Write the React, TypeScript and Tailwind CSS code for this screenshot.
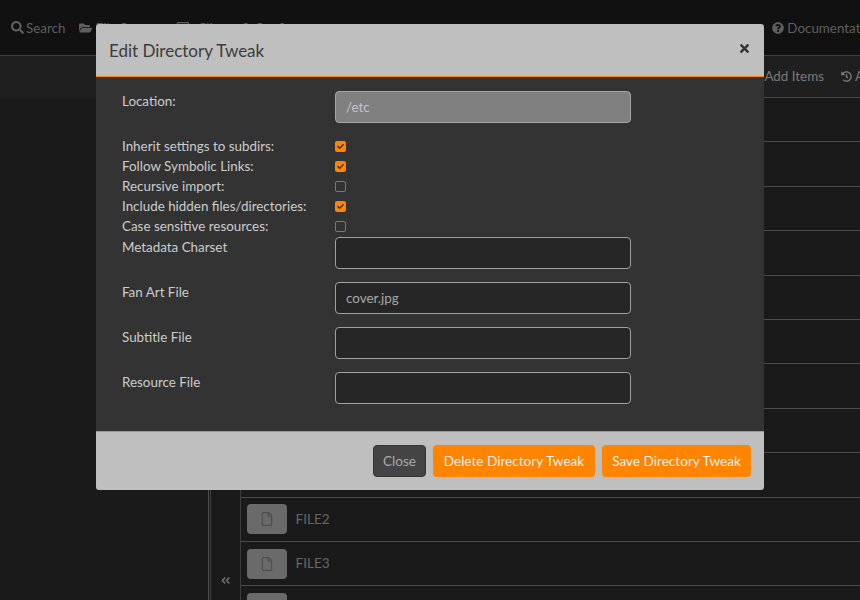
import { FaAngleDoubleLeft, FaCheck, FaFolderOpen, FaHistory, FaQuestionCircle, FaRegFile, FaRegSquare, FaSearch, FaTimes } from 'react-icons/fa'

const font = { fontFamily: 'Lato, sans-serif' }

function TweakInput({ value, disabled }: { value?: string; disabled?: boolean }) {
  return (
    <input
      readOnly
      value={value ?? ''}
      disabled={disabled}
      className={`h-[32px] w-[296px] rounded-[4px] border px-[10px] text-[13.4px] outline-none ${
        disabled ? 'border-[#a6a6a6] bg-[#808080] text-[#c4c4c4]' : 'border-[#a0a0a0] bg-[#262626] text-[#a8a8a8]'
      }`}
    />
  )
}

function CheckRow({ label, checked }: { label: string; checked?: boolean }) {
  return (
    <div className="flex h-[20px] items-center">
      <span className="w-[213px] text-[13.4px] leading-[20px] text-[#cccccc]">{label}</span>
      {checked ? (
        <span className="flex h-[11px] w-[11px] items-center justify-center rounded-[2px] bg-[#ff8400]">
          <FaCheck size={7} className="text-[#333333]" />
        </span>
      ) : (
        <span className="h-[11px] w-[11px] rounded-[2px] border border-[#7a7a7a] bg-[#333333]" />
      )}
    </div>
  )
}

function FieldRow({ label, value, disabled, className }: { label: string; value?: string; disabled?: boolean; className?: string }) {
  return (
    <div className={`flex items-start ${className ?? ''}`}>
      <span className="w-[213px] text-[13.4px] leading-[20px] text-[#cccccc]">{label}</span>
      <TweakInput value={value} disabled={disabled} />
    </div>
  )
}

function FileRow({ name }: { name: string }) {
  return (
    <div className="flex h-[44.4px] shrink-0 items-center gap-[8.5px] border-b border-[#4a4a4a] pl-[6px]">
      <span className="flex h-[30px] w-[40px] items-center justify-center rounded-[4px] bg-[#6a6a6a]">
        <FaRegFile size={14} className="text-[#505050]" />
      </span>
      <span className="text-[13.6px] text-[#666666]">{name}</span>
    </div>
  )
}

export default function App() {
  return (
    <div className="relative h-[600px] w-[860px] overflow-hidden bg-[#1a1a1a]" style={font}>
      {/* Page behind the dialog */}
      <div className="flex h-[56px] items-center justify-between overflow-hidden border-b border-[#5c3a14] bg-[#111111] pl-[11px] pt-[1px] text-[13.4px] text-[#5f5f5f]">
        <div className="flex items-center gap-[14px]">
          <span className="flex items-center gap-[2px]">
            <FaSearch size={13} />
            Search
          </span>
          <span className="flex w-[83px] items-center gap-[3px] whitespace-nowrap">
            <FaFolderOpen size={14} />
            File System
          </span>
          <span className="flex items-center gap-[7px] whitespace-nowrap">
            <FaRegSquare size={14} />
            Clients &amp; Config
          </span>
        </div>
        <span className="-mr-[19px] flex items-center gap-[3px] whitespace-nowrap">
          <FaQuestionCircle size={12} />
          Documentation
        </span>
      </div>
      <div className="flex h-[42px] bg-[#1f1f1f] text-[13.4px] text-[#7a7a7a]">
        <div className="w-[240px]" />
        <div className="flex flex-1 items-center justify-end gap-[17px] border-b border-[#4a4a4a]">
          <span>Add Items</span>
          <span className="flex w-[19px] items-center gap-[3px] overflow-hidden whitespace-nowrap">
            <FaHistory size={11} className="shrink-0" />
            Add
          </span>
        </div>
      </div>
      <div className="flex h-[502px]">
        <div className="w-[209px] border-r border-[#505050]" />
        <div className="relative ml-px w-[31px] border-x border-[#3c3c3c]">
          <FaAngleDoubleLeft size={11} className="absolute bottom-[14px] left-[9px] text-[#5f6b7a]" />
        </div>
        <div className="flex flex-1 flex-col overflow-hidden">
          {['', '', '', '', '', '', '', '', '', 'FILE2', 'FILE3'].map((name, i) => (
            <FileRow key={i} name={name} />
          ))}
          <div className="pl-[6px] pt-[7px]">
            <span className="block h-[30px] w-[40px] rounded-[4px] bg-[#6a6a6a]" />
          </div>
        </div>
      </div>

      {/* Dialog */}
      <div className="absolute left-[96px] top-[24px] flex h-[466px] w-[668px] flex-col overflow-hidden rounded-[3px]">
        <div className="flex h-[53px] shrink-0 items-center justify-between border-b border-[#ff8400] bg-[#bfbfbf] pl-[13px] pr-[13px] pt-[2px]">
          <h5 className="text-[17px] text-[#3c3c3c]">Edit Directory Tweak</h5>
          <FaTimes size={13} className="-translate-y-[3px] text-[#333333]" />
        </div>
        <div className="flex flex-1 flex-col bg-[#333333] pl-[26px] pt-[14px]">
          <FieldRow label="Location:" value="/etc" disabled className="mb-[13px]" />
          <CheckRow label="Inherit settings to subdirs:" checked />
          <CheckRow label="Follow Symbolic Links:" checked />
          <CheckRow label="Recursive import:" />
          <CheckRow label="Include hidden files/directories:" checked />
          <CheckRow label="Case sensitive resources:" />
          <FieldRow label="Metadata Charset" className="mb-[13px] mt-px" />
          <FieldRow label="Fan Art File" value="cover.jpg" className="mb-[13px]" />
          <FieldRow label="Subtitle File" className="mb-[13px]" />
          <FieldRow label="Resource File" />
        </div>
        <div className="flex h-[59px] shrink-0 items-center justify-end gap-[7px] border-t border-[#ff8400] bg-[#bfbfbf] pr-[13px] text-[13.6px]">
          <button className="h-[32px] w-[53px] rounded-[4px] border border-[#333333] bg-[#444444] text-[#aaaaaa]">Close</button>
          <button className="h-[32px] w-[162px] rounded-[4px] bg-[#ff8400] text-[#f2f2f2]">Delete Directory Tweak</button>
          <button className="h-[32px] w-[149px] rounded-[4px] bg-[#ff8400] text-[#f2f2f2]">Save Directory Tweak</button>
        </div>
      </div>
    </div>
  )
}
